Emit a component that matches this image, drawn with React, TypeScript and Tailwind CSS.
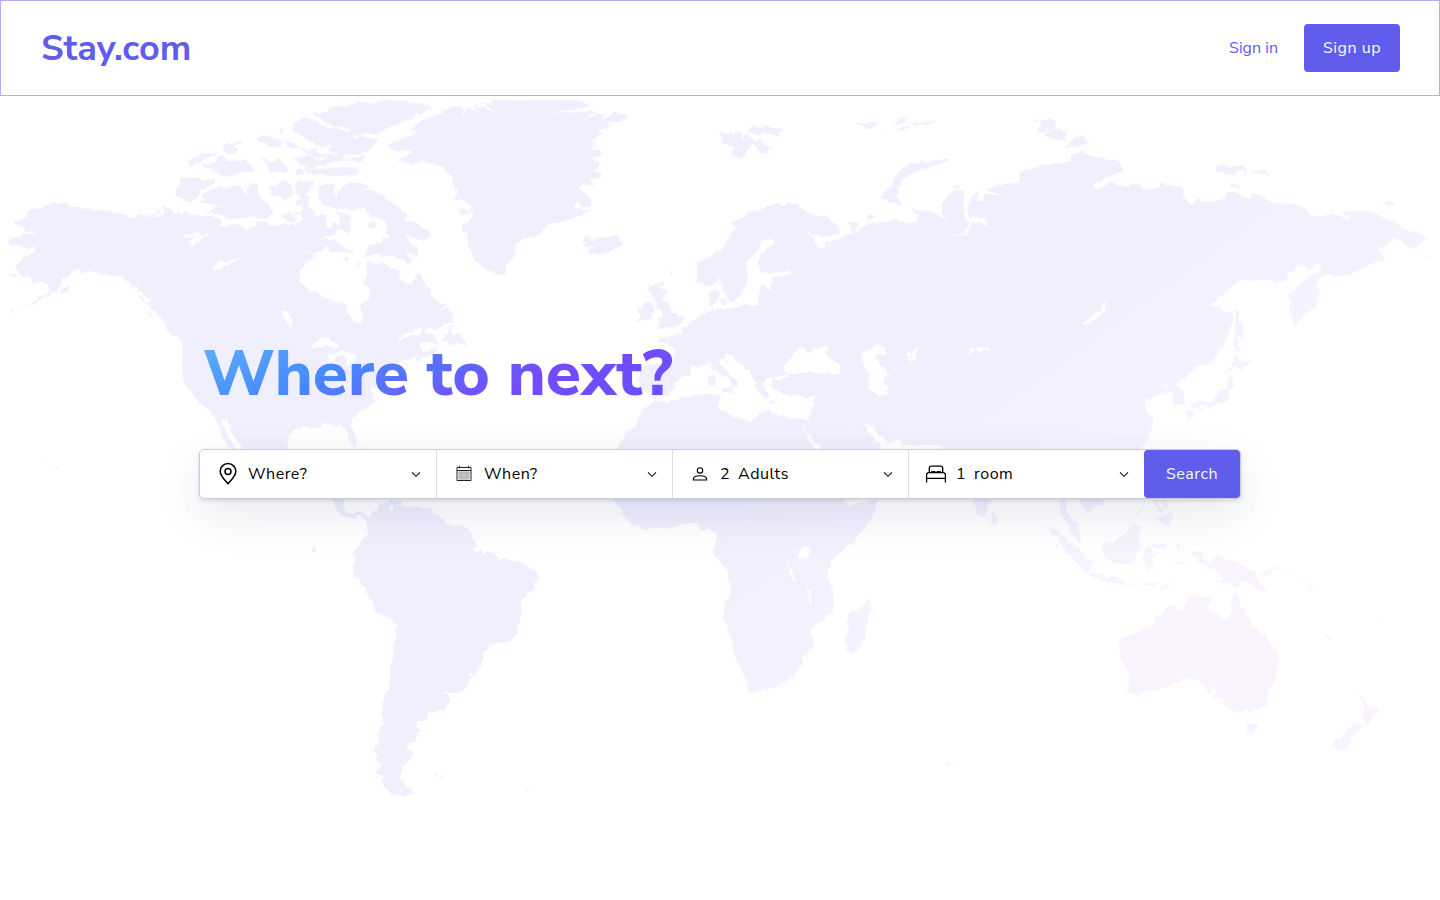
import type { ReactNode } from "react";

const font = "font-['Nunito_Sans','Nunito','Lato',sans-serif]";

const americaNorth = [
  "M42 393L60 387L80 383L78 372L90 360L120 350L135 352L148 345L160 334L168 342L180 345L188 338L205 342L215 352L240 350L252 356L272 354L274 362L300 360L340 366L365 372L385 382L405 385L412 374L445 374L433 388L452 376L480 360L478 368L440 388L470 380L495 368L490 350L500 348L515 362L528 374L535 360L545 375L560 366L580 374L605 378L632 378L640 384L655 384L668 392L655 402L675 410L700 402L725 406L740 425L748 406L775 408L765 392L790 396L810 408L850 404L878 402L888 416L888 400L908 388L905 372L885 376L880 362L905 368L912 345L890 345L885 335L905 325L900 315L888 310L885 285L900 272L945 272L935 290L915 312L930 325L925 350L942 360L950 380L975 375L980 390L975 405L990 418L1000 395L1015 408L1020 385L1005 362L1050 375L1055 385L1045 400L1053 405L1050 435L1030 422L1010 420L1005 435L960 442L990 450L990 462L965 480L945 492L910 482L930 492L945 500L915 520L900 540L897 575L915 585L925 605L950 605L975 622L1000 635L1040 640L1045 675L1060 690L1075 703L1088 695L1088 672L1080 645L1105 630L1112 605L1105 585L1090 580L1100 550L1095 525L1100 512L1130 520L1150 515L1165 530L1190 538L1200 545L1197 568L1222 585L1245 572L1250 550L1257 548L1275 580L1295 605L1285 612L1310 630L1340 645L1310 662L1345 655L1362 670L1360 695L1330 703L1315 718L1250 718L1220 728L1200 745L1183 768L1205 750L1235 735L1268 740L1258 765L1270 788L1310 770L1308 782L1280 800L1250 818L1245 803L1265 795L1225 806L1190 820L1165 840L1150 865L1130 880L1122 900L1112 880L1118 910L1125 935L1100 952L1070 972L1055 990L1053 1010L1068 1040L1068 1065L1060 1070L1045 1045L1038 1015L1020 1005L1010 1010L990 1000L965 1003L958 1015L930 1010L905 1010L880 1020L865 1040L862 1078L870 1140L900 1160L930 1140L960 1130L960 1150L990 1180L1026 1225L1010 1225L985 1220L930 1190L850 1180L790 1150L735 1085L710 1050L690 1020L680 990L660 985L670 1010L690 1050L707 1080L690 1070L670 1050L660 1015L645 985L630 960L600 940L575 910L555 885L545 835L550 775L540 745L520 735L500 715L500 705L480 680L465 660L450 650L425 630L405 600L385 575L360 560L345 562L335 556L310 552L275 545L262 540L250 552L240 537L222 540L205 560L185 570L180 590L165 605L130 625L100 640L80 645L110 630L150 605L145 585L130 575L100 580L90 560L65 560L45 530L65 515L70 500L105 490L105 470L75 473L60 463L40 470L25 452L55 440L70 432L108 437L98 425L75 425L68 408L45 400Z",
  "M540 265L555 264L580 258L605 268L648 270L640 282L605 300L590 325L565 337L545 325L528 315L530 300L540 290Z",
  "M605 315L620 305L645 290L665 295L690 290L725 285L720 295L745 322L740 295L755 280L765 280L775 290L775 305L785 330L805 342L822 360L815 375L800 388L770 385L740 380L700 388L650 375L615 365L640 353L690 352L640 345L595 340L612 330Z",
  "M805 290L830 288L850 270L872 280L878 310L855 330L835 315L820 320L808 300Z",
  "M565 215L600 195L645 188L650 192L615 208L600 220L590 218L578 228Z",
  "M605 225L650 215L655 200L670 198L680 210L700 215L735 210L745 222L765 238L755 245L720 248L680 262L665 255L640 242L655 236L620 235Z",
  "M675 165L720 155L722 162L700 168L718 180L690 192L665 178Z",
  "M768 140L790 137L810 140L845 155L840 172L820 170L800 160L775 155Z",
  "M785 205L815 215L835 205L850 215L865 240L855 250L830 242L810 246L805 232Z",
  "M855 152L880 158L895 172L870 178L858 168Z",
  "M875 205L920 195L960 212L1000 205L1040 208L1090 195L1098 208L1080 215L1040 210L990 218L935 235L900 225L895 210Z",
  "M900 180L940 178L960 190L1000 192L1040 196L1020 206L980 206L930 195Z",
  "M915 235L935 230L960 238L1040 232L1075 235L1075 252L1040 257L1000 258L920 248Z",
  "M885 240L910 242L912 252L890 254Z",
  "M880 100L915 82L940 92L965 105L985 118L1000 112L1050 125L1055 115L1000 108L955 80L930 70L985 66L980 56L1005 48L1035 52L1070 36L1100 40L1160 30L1200 30L1230 36L1260 38L1270 45L1298 52L1280 62L1230 80L1240 88L1200 100L1160 115L1135 130L1095 130L1050 145L1090 140L1135 150L1120 172L1095 190L1030 195L985 185L990 172L1010 160L960 170L925 150L895 130L878 122Z",
  "M955 300L960 288L985 280L1010 285L1000 310L1010 325L1015 300L1050 278L1085 280L1110 290L1080 298L1120 300L1150 320L1190 345L1195 355L1220 370L1215 390L1255 400L1260 412L1295 430L1285 440L1270 455L1240 442L1218 432L1225 455L1255 475L1250 500L1215 478L1235 515L1225 520L1180 495L1150 500L1130 492L1100 500L1095 490L1110 465L1145 460L1145 445L1175 445L1160 430L1160 400L1140 385L1120 385L1090 355L1060 362L1010 355L970 345L955 325Z",
  "M985 465L1000 450L1020 458L1030 470L1062 485L1035 490L1015 485L990 487Z",
  "M1105 398L1125 395L1132 408L1110 416Z", "M1028 505L1052 502L1040 515Z", "M1070 515L1082 520L1075 527Z",
  "M1240 755L1250 742L1265 722L1280 702L1288 705L1276 725L1295 730L1310 745L1318 768L1300 758L1280 758Z",
  "M500 708L530 722L560 740L568 765L545 755L530 738L500 720Z",
  "M440 660L462 685L450 680Z", "M182 600L208 588L198 608L182 610Z", "M28 665L45 656L33 670Z", "M60 653L78 648L65 655Z",
  "M30 555L48 552L50 560L36 562Z", "M835 118L850 124L846 128Z", "M120 1107L130 1110L124 1113Z", "M140 1116L146 1119L141 1120Z", "M158 1125L165 1128L160 1131Z", "M168 1133L178 1138L172 1146Z",
  "M845 378L870 362L880 382L895 388L880 395L855 390Z",
  "M1325 752L1345 725L1352 704L1360 703L1352 722L1362 735L1378 732L1385 745L1398 750L1395 770L1375 758L1345 762Z"
];
const northLakes = [
  "M545 438L575 432L600 425L600 432L625 435L605 445L600 460L585 452L580 465L565 462L572 450L585 438L555 443Z",
  "M637 537L655 520L652 510L675 515L718 505L690 522L668 530L668 538Z",
  "M847 662L860 662L875 690L877 713L870 708L850 680Z",
  "M930 770L955 755L960 745L985 740L1000 755L1015 770L1010 776L985 768L965 772Z",
  "M985 795L1025 780L1072 800L1070 808L1045 805L1020 790L1000 810L990 822L982 815Z",
  "M1045 790L1062 800L1052 825L1040 828L1045 812L1035 800Z", "M1000 808L1010 820L1020 850L1008 858L1000 835Z",
  "M402 590L412 590L410 605L420 600L432 610L422 620L438 618L452 628L440 636L430 625L418 612L405 600Z"
];
const atlantic = [
  "M395 30L655 30L668 38L690 45L665 52L620 60L560 70L640 66L690 62L715 65L685 78L650 100L690 80L735 68L725 85L745 84L760 68L800 72L803 80L775 95L735 100L755 108L710 125L725 130L695 150L705 170L690 180L718 180L732 195L695 205L720 220L718 235L695 240L722 250L720 262L690 268L702 290L670 282L655 295L690 320L690 350L665 352L655 335L635 355L690 360L640 385L600 395L565 400L535 435L515 442L495 442L470 460L465 500L445 515L430 555L410 552L400 545L375 540L340 505L325 470L320 430L308 425L310 405L340 385L342 370L325 352L340 352L310 330L285 330L295 300L285 295L275 262L255 235L225 222L190 215L150 222L115 210L155 190L155 182L105 182L80 165L115 150L165 135L172 122L145 120L180 95L235 72L285 48L305 55L312 75L322 52L350 60L375 75L350 55L345 45L415 68L365 38L400 42Z",
  "M292 362L310 352L330 368L322 378L300 372Z",
  "M662 450L680 435L700 455L710 440L725 445L750 435L770 435L787 460L760 480L725 493L680 487L700 475L665 465L688 458Z",
  "M1078 125L1100 130L1112 122L1118 135L1130 125L1150 145L1160 122L1170 145L1190 155L1205 145L1210 162L1238 180L1225 180L1225 190L1200 185L1190 165L1175 165L1160 185L1145 207L1112 192L1125 178L1090 160Z",
  "M1160 120L1185 107L1200 115L1215 107L1270 118L1250 137L1215 128L1195 136Z",
  "M865 595L885 580L915 576L900 595L927 600L905 632L930 648L935 665L970 685L960 705L930 710L888 718L908 698L890 690L908 680L905 658L885 655L890 640L880 625L875 610Z",
  "M833 655L850 655L850 642L875 640L882 655L875 685L830 697L842 678L830 660Z", "M935 540L936 558L932 550Z",
  "M1440 450L1415 455L1395 462L1400 483L1385 475L1370 475L1360 445L1330 418L1360 435L1400 440L1432 430L1435 410L1395 378L1350 370L1320 355L1310 343L1280 338L1275 350L1250 340L1215 350L1210 360L1170 365L1145 385L1108 402L1130 405L1112 430L1100 455L1085 475L1060 490L1045 505L1012 518L1012 575L1040 588L1060 582L1078 565L1085 590L1095 605L1105 637L1122 632L1145 605L1165 570L1155 520L1195 485L1205 450L1235 445L1245 458L1200 490L1195 515L1200 545L1240 552L1285 543L1297 553L1235 565L1238 580L1230 602L1210 585L1195 600L1195 645L1180 648L1160 642L1125 655L1080 655L1060 660L1048 640L1048 610L1075 598L1078 620L1060 640L1055 662L1020 675L1000 695L970 715L965 730L930 735L925 745L895 742L897 755L920 758L945 780L945 800L935 822L850 822L840 840L840 900L870 908L885 928L900 918L925 915L945 895L945 875L990 850L990 828L1020 830L1052 815L1065 838L1090 858L1112 870L1115 895L1130 895L1138 875L1125 868L1105 855L1080 820L1075 805L1095 808L1095 790L1110 790L1125 808L1170 845L1175 860L1190 880L1185 890L1200 905L1215 927L1225 925L1225 910L1208 885L1215 870L1240 860L1235 890L1260 905L1290 920L1320 915L1340 922L1370 915L1360 950L1355 985L1340 990L1300 985L1270 980L1240 970L1220 958L1195 975L1175 998L1125 980L1090 962L1072 948L1085 915L1045 912L1000 915L930 937L885 930L845 965L830 1000L800 1030L768 1080L740 1180L740 1220L1440 1220Z",
  "M1085 895L1118 890L1118 910L1088 905Z", "M1045 860L1065 855L1062 885L1048 882Z", "M1052 832L1062 830L1060 850Z",
  "M1080 630L1098 625L1094 645L1082 645Z", "M1225 932L1255 935L1230 940Z", "M1325 937L1352 930L1335 943Z"
];
const atlanticHoles = [
  "M1272 830L1300 795L1315 775L1330 775L1325 790L1340 798L1375 775L1405 768L1390 790L1442 830L1442 852L1400 850L1370 840L1310 852L1275 850Z",
  "M1240 865L1280 855L1290 862L1250 870Z", "M1326 1004L1342 1030L1380 1070L1390 1085L1365 1085Z"
];
const asia = [
  "M0 365L35 375L60 380L95 410L90 435L50 437L10 418L30 445L35 475L55 482L65 465L85 475L80 450L125 435L120 395L145 400L130 420L140 425L165 402L200 398L235 385L245 395L285 395L290 375L270 355L330 368L365 395L348 372L348 345L375 300L400 300L405 390L415 400L400 430L370 433L405 437L425 400L445 395L460 415L458 390L430 378L415 385L410 355L420 325L440 300L430 330L455 335L450 310L495 322L475 305L455 300L490 283L540 278L540 245L600 225L630 222L660 215L670 190L692 183L715 200L725 205L775 210L790 230L785 245L745 265L710 298L745 290L760 275L785 290L830 283L840 297L882 297L885 278L915 290L935 290L945 330L960 345L975 326L1000 335L1040 328L1050 305L1075 308L1095 325L1110 310L1140 325L1165 345L1210 340L1240 355L1255 380L1290 372L1320 378L1345 388L1345 378L1325 370L1345 362L1410 368L1430 385L1450 390L1490 425L1510 425L1535 445L1520 460L1512 478L1490 468L1470 450L1450 445L1430 475L1405 468L1425 485L1430 512L1415 512L1375 535L1345 555L1305 558L1300 550L1275 560L1262 590L1275 600L1268 630L1258 655L1235 672L1212 712L1200 660L1200 610L1240 570L1270 545L1280 515L1270 520L1245 545L1240 525L1215 530L1190 560L1195 570L1165 577L1150 568L1115 572L1080 570L1065 580L1045 605L1000 648L1025 650L1035 665L1060 665L1060 700L1040 760L1005 820L975 828L955 845L945 865L920 880L940 905L940 940L915 947L915 910L895 880L860 912L850 895L832 905L828 890L865 865L870 880L855 895L895 885L910 905L895 912L860 920L843 940L850 960L865 985L865 1020L845 1060L835 1080L820 1190L345 1190L345 1070L300 1065L255 1065L240 1045L215 1060L185 1020L180 1005L160 1005L165 1025L195 1060L200 1190L110 1190L60 1110L30 1030L5 1003L15 1040L45 1110L90 1190L0 1190L0 990L22 988L40 915L0 920Z",
  "M195 320L215 300L235 260L240 245L270 222L325 212L365 203L365 213L290 240L250 270L235 315L252 345L215 340L215 328Z",
  "M135 103L160 98L195 98L180 108L160 118L160 108Z", "M225 98L250 85L272 82L250 90L260 100L240 103Z", "M240 115L262 108L270 114L250 120Z", "M275 98L300 98L332 92L325 100L295 104L280 107Z", "M205 112L217 115L207 117Z",
  "M568 90L585 91L578 95Z", "M590 95L618 88L632 105L615 120L600 125L595 130L582 122Z", "M600 130L625 118L652 125L650 152L625 148L602 138Z", "M652 174L670 145L685 137L708 155L695 168Z",
  "M1018 240L1025 222L1050 228L1070 230L1088 228L1095 248L1075 240L1065 255L1022 250Z", "M1105 240L1145 245L1150 255L1125 253Z", "M1050 285L1075 282L1080 292L1055 290Z",
  "M1425 340L1445 332L1462 338L1440 346Z", "M1520 497L1548 500L1540 504Z", "M163 380L175 372L182 382L168 388Z", "M375 288L392 287L390 295L376 295Z",
  "M1068 655L1078 672L1078 695L1090 740L1072 740L1072 765L1080 780L1075 788L1065 775L1065 700Z",
  "M1065 792L1085 815L1108 813L1082 838L1062 830L1058 845L1048 840L1060 822Z",
  "M1055 852L1063 885L1052 910L1050 938L1020 942L1000 957L995 945L955 955L960 945L980 935L1010 935L1018 915L1045 890Z",
  "M943 965L965 963L962 980L952 992Z", "M970 960L990 950L985 962Z"
];
const asiaHoles = [
  "M0 800L0 775L25 790L35 780L70 766L60 788L98 830L95 850L60 852L25 842L0 850Z",
  "M148 800L180 772L208 770L208 792L185 798L190 822L208 835L210 850L224 858L205 865L205 880L215 890L215 915L195 918L167 895L172 855L158 825Z",
  "M262 790L270 785L268 805L275 808L275 782L290 778L282 788L285 805L272 815L262 808Z",
  "M412 797L415 780L425 774L465 773L465 778L430 781L417 790Z", "M693 702L712 680L735 662L748 632L748 655L735 680L710 700Z", "M5 935L25 932L12 943Z"
];
const south = [
  "M70 150L118 150L112 190L118 212L135 222L150 213L172 220L180 232L205 200L212 190L232 185L245 178L240 198L232 205L240 218L245 205L240 188L258 183L268 198L290 200L325 205L348 200L338 212L350 218L375 235L380 250L395 257L425 257L440 265L450 285L448 295L465 310L460 320L450 328L458 335L478 328L472 350L490 335L520 350L518 363L530 358L575 363L590 380L615 390L622 415L610 450L592 460L580 478L578 530L570 550L565 585L545 605L510 610L478 640L475 675L460 700L450 712L440 725L430 745L415 758L370 757L388 768L392 785L375 810L333 817L330 845L303 843L308 860L320 868L305 880L300 902L280 912L280 928L297 940L290 955L265 985L262 1015L280 1045L300 1057L270 1070L235 1058L218 1040L212 1018L225 1015L200 997L210 975L197 960L205 945L193 930L208 905L205 870L218 850L215 790L235 730L235 685L248 620L250 550L200 512L188 485L165 435L140 400L136 380L148 365L140 345L155 310L178 285L178 260L172 240L162 230L155 225L142 240L130 230L105 225Z",
  "M805 120L815 176L835 200L850 235L880 258L903 272L940 262L965 267L1010 247L1040 250L1045 270L1065 267L1088 280L1088 310L1078 338L1112 385L1120 420L1125 435L1127 465L1112 490L1105 535L1130 600L1138 655L1155 690L1168 725L1168 750L1185 757L1200 748L1250 742L1290 705L1312 672L1312 648L1342 620L1340 590L1333 570L1350 550L1395 515L1393 450L1380 420L1378 400L1390 360L1450 300L1480 260L1500 220L1505 200L1505 180L1450 192L1435 202L1420 176L1390 120Z",
  "M1485 472L1497 512L1487 520L1475 590L1460 630L1440 637L1428 625L1423 595L1435 570L1428 545L1433 520L1465 508Z",
  "M30 328L35 322L40 332L33 339Z", "M348 1008L360 1000L358 1008Z", "M363 1010L378 1005L370 1012Z", "M588 1046L602 1050L610 1059L598 1054Z", "M130 0L148 0L145 22Z", "M168 18L172 22L169 28Z"
];
const southHoles = [
  "M1305 333L1315 322L1335 325L1322 355L1302 352Z", "M1277 362L1284 392L1296 425L1288 420L1277 395Z", "M1328 440L1335 455L1334 478L1341 496L1330 488Z", "M445 702L455 698L448 712Z"
];
const oceania = [
  "M205 160L270 160L270 178L252 200L248 225L236 232L222 215Z", "M268 212L280 222L287 242L276 257L264 250Z",
  "M465 160L482 160L485 220L515 250L520 275L530 312L505 290L485 245L467 225Z", "M508 160L592 160L590 190L560 205L545 222L535 210Z",
  "M432 262L455 270L480 295L500 310L520 325L530 345L555 365L552 397L535 392L500 355L470 315Z",
  "M548 405L565 398L600 410L640 411L632 420L660 430L658 434L610 425L560 412Z",
  "M587 310L605 305L620 310L640 285L655 280L670 262L682 248L690 262L705 265L692 285L700 320L685 335L682 355L665 375L640 368L620 370L600 355L587 335Z",
  "M715 325L735 312L770 312L765 322L730 325L730 345L755 338L730 355L742 385L725 380L715 395L712 365L705 360Z",
  "M800 305L815 318L805 332Z", "M785 367L815 365L835 368L820 373Z",
  "M665 430L690 432L685 438Z", "M695 432L730 430L758 430L730 440Z", "M755 450L770 435L798 430Z", "M700 444L720 446L715 451Z",
  "M842 340L855 333L872 336L880 345L882 362L900 368L918 347L980 365L1035 400L1035 415L1068 455L1040 450L1010 425L995 425L980 440L955 430L920 425L935 420L925 395L885 375L860 370L868 355Z",
  "M1043 398L1065 398L1088 380L1092 385L1070 405L1050 404Z", "M1088 373L1100 382L1096 387Z", "M1117 398L1132 410L1125 408Z", "M1160 422L1180 430L1170 428Z", "M1185 430L1205 458L1188 445Z",
  "M735 178L750 180L752 192L742 200Z", "M755 178L778 190L775 205L762 195Z", "M750 200L765 210L758 220L747 210Z", "M738 240L760 225L790 212L792 238L775 262L755 240Z", "M685 225L708 195L706 205L690 227Z",
  "M715 40L738 20L740 40Z", "M552 362L563 358L562 368Z", "M448 310L460 316L454 321Z", "M572 362L578 365L574 368Z",
  "M640 598L665 588L720 565L742 545L740 530L755 530L770 505L795 493L812 512L825 510L828 490L845 470L860 468L908 475L895 500L905 515L945 542L958 535L965 500L962 480L975 457L985 475L985 500L1003 505L1018 558L1055 580L1070 600L1078 615L1098 640L1101 680L1092 715L1070 750L1060 800L1025 808L1018 820L1003 805L990 818L945 800L940 780L922 768L905 778L918 750L915 738L895 762L890 745L875 728L845 717L800 728L755 748L720 750L685 765L655 755L665 740L662 705L650 672L637 650L642 640L637 620Z",
  "M830 467L845 465L838 471Z", "M1000 846L1018 853L1040 847L1040 862L1020 885L1005 870Z",
  "M1328 763L1345 775L1358 800L1372 808L1390 805L1388 815L1372 830L1360 852L1350 857L1348 840L1337 828L1350 805L1345 790Z",
  "M1318 850L1328 853L1338 850L1338 862L1315 890L1300 920L1280 932L1252 922L1255 908L1285 888Z", "M1262 935L1272 933L1265 939Z",
  "M1225 577L1245 587L1258 600L1238 592Z", "M1378 545L1390 543L1385 551Z", "M1396 533L1405 528L1400 535Z", "M130 970L135 962L155 970L150 976L133 976Z"
];

function Shapes({ items, fill = "white" }: { items: string[]; fill?: string }) {
  return <path d={items.join("")} fill={fill} stroke={fill} strokeWidth="0.7" strokeLinejoin="round" />;
}

const nw = "translate(0 90) scale(.33333)";
const mid = "translate(360 90) scale(.33333)";
const ne = "translate(800 90) scale(.40816 .33333)";
const sw = "translate(300 440) scale(.38265 .33333)";
const se = "translate(900 440) scale(.34439 .33333)";

function WorldMap() {
  return (
    <svg viewBox="0 100 1440 700" className="absolute top-1 left-0 h-[700px] w-[1440px]" aria-hidden="true">
      <defs>
        <linearGradient id="land" gradientUnits="userSpaceOnUse" x1="500" y1="100" x2="1058" y2="860">
          <stop offset="0" stopColor="#f0effd" />
          <stop offset="0.5" stopColor="#f0effd" />
          <stop offset="0.62" stopColor="#f4f1fe" />
          <stop offset="0.85" stopColor="#f8f3ff" />
          <stop offset="1" stopColor="#f9f3ff" />
        </linearGradient>
        <filter id="coast" filterUnits="userSpaceOnUse" x="0" y="90" width="1440" height="720" colorInterpolationFilters="sRGB">
          <feTurbulence type="fractalNoise" baseFrequency="0.16" numOctaves="2" seed="4" result="noise" />
          <feDisplacementMap in="SourceGraphic" in2="noise" scale="5" xChannelSelector="R" yChannelSelector="G" />
        </filter>
        <mask id="continents" maskUnits="userSpaceOnUse" x="0" y="100" width="1440" height="700">
          <g filter="url(#coast)">
            <g transform={nw}><Shapes items={americaNorth} /><Shapes items={northLakes} fill="black" /></g>
            <g transform={mid}><Shapes items={atlantic} /></g>
            <g transform={ne}><Shapes items={asia} /><Shapes items={asiaHoles} fill="black" /></g>
            <g transform={mid}><Shapes items={atlanticHoles} fill="black" /></g>
            <g transform={sw}><Shapes items={south} /><Shapes items={southHoles} fill="black" /></g>
            <g transform={se}><Shapes items={oceania} /></g>
          </g>
        </mask>
      </defs>
      <rect y="100" width="1440" height="700" fill="url(#land)" mask="url(#continents)" />
    </svg>
  );
}

function PinIcon() {
  return (
    <svg width="24" height="24" viewBox="0 0 24 24" fill="none" stroke="black" strokeWidth="1.5">
      <path d="M12 21.7C8 17.1 4.2 13.8 4.2 9.4a7.8 7.8 0 0 1 15.6 0c0 4.400-3.800 7.700-7.800 12.300Z" />
      <circle cx="12" cy="9.500" r="3" />
    </svg>
  );
}

function CalendarIcon() {
  return (
    <svg width="24" height="24" viewBox="0 0 24 24" fill="none" stroke="#222" strokeWidth="1">
      <path d="M5 5.500h14v13H5zM5 8.500h14" />
      <path d="M7.500 3.800v2.400M16.500 3.800v2.400" />
      <path d="M7 10h10v7H7z" fill="#ccc" stroke="#aaa" />
      <path d="M9.500 9.500v8M12 9.500v8M14.500 9.500v8M6.500 12h11M6.500 14.500h11" stroke="#aaa" strokeWidth=".6" />
    </svg>
  );
}

function PersonIcon() {
  return (
    <svg width="24" height="24" viewBox="0 0 24 24" fill="none" stroke="black" strokeWidth="1.100">
      <circle cx="12" cy="8.400" r="2.700" />
      <path d="M5.300 18v-.6c0-2.200 3-3.600 6.700-3.600s6.700 1.400 6.700 3.600v.6Z" />
    </svg>
  );
}

function BedIcon() {
  return (
    <svg width="24" height="24" viewBox="0 0 24 24" fill="none" stroke="black" strokeWidth="1.300">
      <path d="M2.600 20.500v-7.600c0-1.400 1-2.300 2.300-2.300h14.200c1.300 0 2.300.9 2.300 2.300v7.600M2.600 16.400h18.800M5.300 10.500V6.200c0-1.200.8-2 2-2h9.400c1.200 0 2 .8 2 2v4.300" />
      <path d="M7.200 9.900h4.200M12.600 9.900h4.200" strokeWidth="1.700" />
    </svg>
  );
}

function Chevron() {
  return (
    <svg width="24" height="24" viewBox="0 0 24 24" fill="none" stroke="#111" strokeWidth="1.100">
      <path d="m8 10.300 4 4 4-4" />
    </svg>
  );
}

function Field({ icon, children }: { icon: ReactNode; children: ReactNode }) {
  return (
    <button className="flex h-12 w-[236px] items-center border-l border-[#dedee3] pr-2 pl-[15px] first:border-l-0 first:pl-4">
      {icon}
      <span className="ml-2 flex flex-1 gap-2 text-left text-base leading-6 tracking-[0.5px] text-black">{children}</span>
      <Chevron />
    </button>
  );
}

export default function App() {
  return (
    <div className={`flex h-[900px] w-[1440px] flex-col overflow-hidden bg-white ${font}`}>
      <header className="flex h-24 shrink-0 items-center justify-between border border-[#b0aef6] px-[39px]">
        <a className="pt-px pl-px text-[36px] leading-[48px] font-bold text-[#605dec]">Stay.com</a>
        <nav className="flex items-center gap-[26px] text-base leading-6">
          <a className="text-[#605dec]">Sign in</a>
          <button className="h-12 w-24 rounded bg-[#605dec] tracking-[0.5px] text-[#fafafa]">Sign up</button>
        </nav>
      </header>
      <main className="relative flex-1">
        <WorldMap />
        <section className="relative ml-[199px] w-[1042px] pt-[234px]">
          <h1 className="ml-1 w-[474px] bg-[linear-gradient(155deg,#5aaeff_5%,#4788ff_33%,#754aff_66%,#6054ff_100%)] bg-clip-text text-[64px] leading-[88px] font-extrabold whitespace-nowrap text-transparent">
            Where to next?
          </h1>
          <form className="mt-[31px] flex h-[50px] rounded-[5px] border border-[#cbc9dd] bg-white shadow-[0_2px_4px_rgba(28,5,77,0.12),0_12px_48px_rgba(33,6,49,0.025),0_16px_48px_rgba(28,50,110,0.09)]">
            <Field icon={<PinIcon />}>Where?</Field>
            <Field icon={<CalendarIcon />}>When?</Field>
            <Field icon={<PersonIcon />}><span>2</span><span>Adults</span></Field>
            <Field icon={<BedIcon />}><span>1</span><span>room</span></Field>
            <button className="h-12 w-24 shrink-0 rounded bg-[#605dec] text-base leading-6 tracking-[0.5px] text-[#fafafa]">Search</button>
          </form>
        </section>
      </main>
    </div>
  );
}
